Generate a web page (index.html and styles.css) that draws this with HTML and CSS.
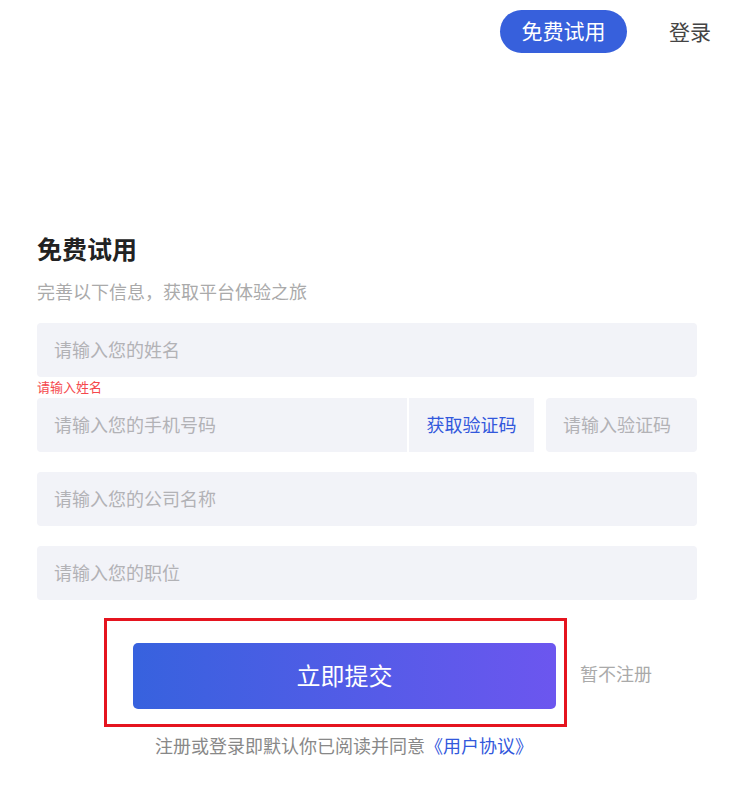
FILE: index.html
```html
<!DOCTYPE html>
<html lang="zh-CN">
<head>
    <meta charset="UTF-8">
    <meta name="viewport" content="width=device-width, initial-scale=1.0">
    <title>免费试用</title>
    <link rel="stylesheet" href="styles.css">
</head>
<body>
    <div id="header">
        <a class="btn-trial" href="javascript:;">免费试用</a>
        <a class="btn-login" href="javascript:;">登录</a>
    </div>
    <div id="form-box">
        <h2 class="title">免费试用</h2>
        <p class="sub-title">完善以下信息，获取平台体验之旅</p>
        <input class="ipt" type="text" placeholder="请输入您的姓名">
        <p class="err">请输入姓名</p>
        <div class="row">
            <input class="ipt ipt-phone" type="text" placeholder="请输入您的手机号码">
            <span class="btn-code">获取验证码</span>
            <input class="ipt ipt-code" type="text" placeholder="请输入验证码">
        </div>
        <input class="ipt gap" type="text" placeholder="请输入您的公司名称">
        <input class="ipt gap" type="text" placeholder="请输入您的职位">
        <div class="submit-row">
            <div class="submit-box">
                <button class="btn-submit">立即提交</button>
            </div>
            <span class="skip">暂不注册</span>
        </div>
        <p class="agree">注册或登录即默认你已阅读并同意<a href="javascript:;">《用户协议》</a></p>
    </div>
</body>
</html>
```

FILE: styles.css
```css
*{
    margin: 0;
    padding: 0;
    box-sizing: border-box;
}
body{
    font-family: "Noto Sans CJK SC", "Noto Sans", sans-serif;
    background: #fff;
    color: #333;
}
a{
    text-decoration: none;
}
#header{
    display: flex;
    justify-content: flex-end;
    align-items: center;
    padding: 10px 45px 0 0;
}
.btn-trial{
    width: 127px;
    height: 43px;
    line-height: 41px;
    border-radius: 22px;
    background: #3760dc;
    color: #fff;
    font-size: 21px;
    text-align: center;
}
.btn-login{
    margin-left: 42px;
    font-size: 21px;
    line-height: 41px;
    color: #444;
}
#form-box{
    width: 660px;
    margin: 180px 0 0 37px;
}
.title{
    font-size: 25px;
    line-height: 30px;
    font-weight: bold;
    color: #222;
}
.sub-title{
    margin-top: 16px;
    font-size: 18px;
    line-height: 24px;
    color: #aaa;
}
.ipt{
    display: block;
    width: 100%;
    height: 54px;
    border: none;
    outline: none;
    border-radius: 4px;
    background: #f2f3f8;
    padding: 0 0 2px 17px;
    font-size: 18px;
    font-family: inherit;
    color: #333;
}
.ipt::placeholder{
    color: #b2b2b6;
}
#form-box > .ipt:first-of-type{
    margin-top: 20px;
}
.err{
    height: 21px;
    font-size: 13px;
    line-height: 19px;
    color: #f5484d;
}
.row{
    display: flex;
}
.ipt-phone{
    width: 370px;
    border-radius: 4px 0 0 4px;
}
.btn-code{
    width: 125px;
    height: 54px;
    line-height: 52px;
    margin-left: 2px;
    background: #f2f3f8;
    color: #3258dc;
    font-size: 18px;
    text-align: center;
}
.ipt-code{
    width: 151px;
    margin-left: 12px;
}
.gap{
    margin-top: 20px;
}
.submit-row{
    display: flex;
    align-items: center;
    margin: 18px 0 0 67px;
}
.submit-box{
    border: 3px solid #e5141f;
    padding: 22px 8px 15px 26px;
}
.btn-submit{
    display: block;
    width: 423px;
    height: 66px;
    border: none;
    border-radius: 5px;
    background: linear-gradient(90deg, #3762de, #6c56ef);
    color: #fff;
    font-size: 24px;
    font-family: inherit;
    padding-bottom: 4px;
}
.skip{
    margin-left: 13px;
    font-size: 18px;
    color: #aaa;
}
.agree{
    margin: 6px 0 0 118px;
    font-size: 18px;
    line-height: 24px;
    color: #888;
}
.agree a{
    color: #3258dc;
}
```
